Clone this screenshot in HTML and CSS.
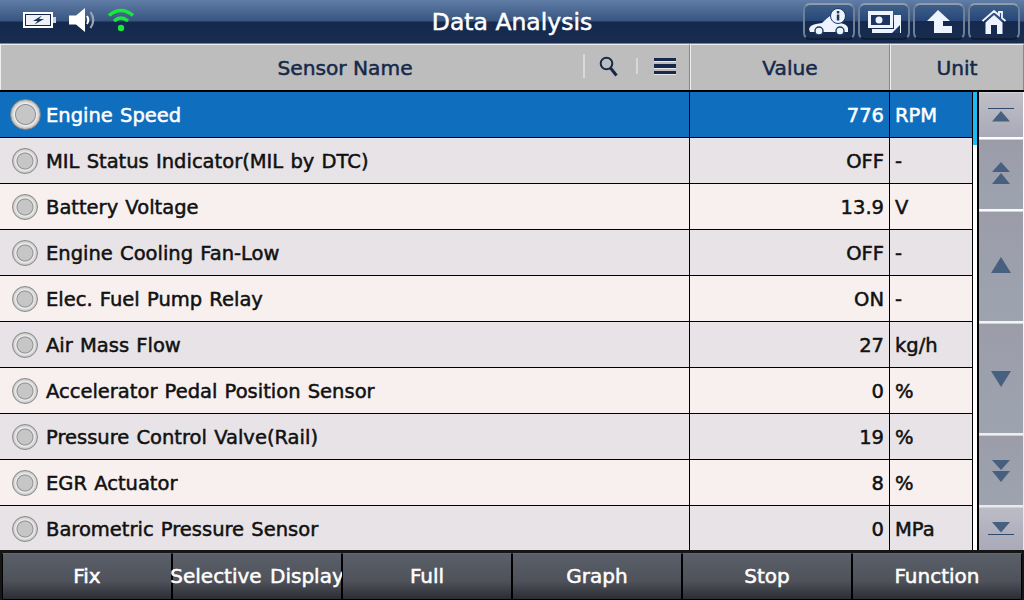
FILE: index.html
```html
<!DOCTYPE html>
<html lang="en">
  <head>
    <meta charset="UTF-8" />
    <title>Data Analysis</title>
    <link rel="stylesheet" href="styles.css">
  </head>
  <body>
    <!-- Title bar -->
    <header class="topbar">
      <div class="status-icons">
        <svg width="34" height="16" viewBox="0 0 34 16">
          <rect x="0" y="0" width="30" height="16" fill="#fff"/>
          <rect x="2" y="2" width="26" height="12" fill="#16294a"/>
          <rect x="3" y="3" width="24" height="10" fill="#eef1f6"/>
          <path d="M19 3.500 L10 9 H14.500 L11.500 12.500 L21 7 H16 Z" fill="#1b3157"/>
          <rect x="30" y="5" width="3" height="6" fill="#cfd4dc"/>
        </svg>
        <svg width="27" height="24" viewBox="0 0 27 24">
          <path d="M0 7.500 H7 L16 0 V24 L7 16.500 H0 Z" fill="#fff"/>
          <path d="M18 8 Q20.500 12 18 16" fill="none" stroke="#fff" stroke-width="2"/>
          <path d="M21.500 4 Q27 12 21.500 20" fill="none" stroke="#9aa6b8" stroke-width="2.200"/>
        </svg>
        <svg width="26" height="24" viewBox="0 0 26 24">
          <path d="M1 7.500 Q13 -2.500 25 7.500" fill="none" stroke="#16e83c" stroke-width="3.400"/>
          <path d="M6 13 Q13 7 20 13" fill="none" stroke="#16e83c" stroke-width="3.400"/>
          <circle cx="13" cy="20" r="3.200" fill="#16e83c"/>
        </svg>
      </div>
      <h1 class="title">Data Analysis</h1>
      <nav class="top-buttons">
        <span class="top-btn">
          <svg width="40" height="28" viewBox="0 0 40 28">
            <path d="M0 21 Q1 17 7 16 L13 15 Q18 10 21 8 Q25 7 28 10 L31 15 Q38 16 39 20 L39 24 H1 Z" fill="#eef4ff"/>
            <circle cx="10" cy="23" r="4" fill="#eef4ff" stroke="#1d3660" stroke-width="1.400"/>
            <circle cx="31" cy="23" r="4" fill="#eef4ff" stroke="#1d3660" stroke-width="1.400"/>
            <circle cx="29" cy="8" r="7.500" fill="#eef4ff" stroke="#1d3660" stroke-width="1"/>
            <rect x="27.800" y="6.500" width="2.500" height="6" fill="#1d3660"/>
            <rect x="27.800" y="3" width="2.500" height="2.400" fill="#1d3660"/>
          </svg>
        </span>
        <span class="top-btn">
          <svg width="33" height="22" viewBox="0 0 33 22">
            <path d="M4 18 H26 V4 H33 V22 H4 Z" fill="#eef4ff"/>
            <rect x="0" y="0" width="25" height="17" fill="#eef4ff"/>
            <rect x="3" y="4" width="19" height="10" fill="#1d3660"/>
            <circle cx="11" cy="9" r="3.500" fill="#eef4ff"/>
            <path d="M24 22 L32 14 V22 Z" fill="#1d3660"/>
          </svg>
        </span>
        <span class="top-btn">
          <svg width="25" height="23" viewBox="0 0 25 23">
            <path d="M11 0 L23 11 H16 V16 H25 V23 H7 V11 H0 Z" fill="#eef4ff"/>
          </svg>
        </span>
        <span class="top-btn">
          <svg width="24" height="24" viewBox="0 0 24 24">
            <path d="M0.500 11 L12 1 L17 5.300 V2 H20 V8 L23.500 11" fill="none" stroke="#eef4ff" stroke-width="1.800"/>
            <path d="M3.500 12.500 L12 5 L20.500 12.500 V24 H15 V15 H9 V24 H3.500 Z" fill="#eef4ff"/>
          </svg>
        </span>
      </nav>
    </header>

    <!-- Column headings -->
    <section class="table-head">
      <div class="head-name">
        <span class="head-label">Sensor Name</span>
        <span class="head-tools">
          <svg width="19" height="21" viewBox="0 0 19 21">
            <circle cx="7.500" cy="7.500" r="5.800" fill="none" stroke="#16294a" stroke-width="2"/>
            <path d="M11.500 12 L17.500 19.500" stroke="#16294a" stroke-width="3"/>
          </svg>
          <span class="menu-icon"><i></i><i></i><i></i></span>
        </span>
      </div>
      <div class="head-value">Value</div>
      <div class="head-unit">Unit</div>
    </section>

    <!-- Data rows and paging -->
    <section class="content">
      <div class="rows">
        <div class="row active"><span class="name"><i class="dot"></i>Engine Speed</span><span class="value">776</span><span class="unit">RPM</span></div>
        <div class="row"><span class="name"><i class="dot"></i>MIL Status Indicator(MIL by DTC)</span><span class="value">OFF</span><span class="unit">-</span></div>
        <div class="row"><span class="name"><i class="dot"></i>Battery Voltage</span><span class="value">13.9</span><span class="unit">V</span></div>
        <div class="row"><span class="name"><i class="dot"></i>Engine Cooling Fan-Low</span><span class="value">OFF</span><span class="unit">-</span></div>
        <div class="row"><span class="name"><i class="dot"></i>Elec. Fuel Pump Relay</span><span class="value">ON</span><span class="unit">-</span></div>
        <div class="row"><span class="name"><i class="dot"></i>Air Mass Flow</span><span class="value">27</span><span class="unit">kg/h</span></div>
        <div class="row"><span class="name"><i class="dot"></i>Accelerator Pedal Position Sensor</span><span class="value">0</span><span class="unit">%</span></div>
        <div class="row"><span class="name"><i class="dot"></i>Pressure Control Valve(Rail)</span><span class="value">19</span><span class="unit">%</span></div>
        <div class="row"><span class="name"><i class="dot"></i>EGR Actuator</span><span class="value">8</span><span class="unit">%</span></div>
        <div class="row"><span class="name"><i class="dot"></i>Barometric Pressure Sensor</span><span class="value">0</span><span class="unit">MPa</span></div>
      </div>
      <div class="scroll-track"><div class="scroll-thumb"></div></div>
      <div class="pager">
        <span class="page-btn first">
          <svg width="26" height="14" viewBox="0 0 26 14"><path d="M0 0.500 H26" stroke="#2f4a6c"/><path d="M13 3 L22 13.500 H4 Z" fill="#47607f"/></svg>
        </span>
        <span class="page-btn dbl up">
          <svg width="20" height="22" viewBox="0 0 20 22"><path d="M10 0 L19 10 H1 Z M10 11 L19 22 H1 Z" fill="#47607f"/></svg>
        </span>
        <span class="page-btn big up">
          <svg width="20" height="16" viewBox="0 0 20 16"><path d="M10 0 L20 16 H0 Z" fill="#47607f"/></svg>
        </span>
        <span class="page-btn big">
          <svg width="20" height="16" viewBox="0 0 20 16"><path d="M0 0 H20 L10 16 Z" fill="#47607f"/></svg>
        </span>
        <span class="page-btn dbl">
          <svg width="20" height="22" viewBox="0 0 20 22"><path d="M1 0 H19 L10 10 Z M1 11 H19 L10 22 Z" fill="#47607f"/></svg>
        </span>
        <span class="page-btn last">
          <svg width="26" height="14" viewBox="0 0 26 14"><path d="M4 0 H22 L13 10.500 Z" fill="#47607f"/><path d="M0 12.500 H26" stroke="#2f4a6c"/></svg>
        </span>
      </div>
    </section>

    <!-- Bottom buttons -->
    <footer class="bottom-bar">
      <span class="bottom-btn">Fix</span>
      <span class="bottom-btn">Selective Display</span>
      <span class="bottom-btn">Full</span>
      <span class="bottom-btn">Graph</span>
      <span class="bottom-btn">Stop</span>
      <span class="bottom-btn">Function</span>
    </footer>
  </body>
</html>
```

FILE: styles.css
```css
* {
  box-sizing: border-box;
}
html,
body {
  margin: 0;
  height: 100%;
}
body {
  display: flex;
  flex-direction: column;
  width: 1024px;
  height: 600px;
  overflow: hidden;
  background: #000;
  font-family: "DejaVu Sans", sans-serif;
  font-size: 19.5px;
  word-spacing: 1px;
  -webkit-text-stroke: 0.5px currentColor;
}

/* Title bar */
.topbar {
  display: flex;
  align-items: center;
  position: relative;
  height: 44px;
  flex: none;
  border-bottom: 1px solid #7a8698;
  background: linear-gradient(#5f7da6 0, #37557f 21px, #14294d 22px, #182c50 43px);
}
.status-icons {
  display: flex;
  align-items: center;
  gap: 12px;
  padding: 0 0 4px 23px;
}
.title {
  position: absolute;
  left: 0;
  right: 0;
  margin: 0;
  text-align: center;
  font-size: 23.5px;
  font-weight: normal;
  word-spacing: 0;
  color: #fff;
}
.top-buttons {
  display: flex;
  gap: 3px;
  margin-left: auto;
  padding-right: 4px;
  z-index: 1;
}
.top-btn {
  display: flex;
  justify-content: center;
  align-items: center;
  width: 52px;
  height: 37px;
  border: 2px solid #6f7f97;
  border-top-color: #8f9cae;
  border-bottom-color: #101d36;
  border-radius: 7px;
  background: linear-gradient(#3f5f88, #27477a 47%, #14294d 50%, #182c50);
}

/* Column headings */
.table-head {
  display: grid;
  grid-template-columns: 690px 200px 1fr;
  height: 48px;
  flex: none;
  border-bottom: 2px solid #000;
  background: #bdbdbd;
  color: #16294a;
  font-size: 20.2px;
  word-spacing: 0;
}
.table-head > div {
  display: flex;
  justify-content: center;
  align-items: center;
  padding-top: 1px;
  border-top: 1px solid #eee;
  border-left: 1px solid #eee;
  border-right: 1px solid #888;
}
.head-name {
  position: relative;
}
.head-tools {
  position: absolute;
  top: 9px;
  right: 0;
  display: flex;
  align-items: center;
  gap: 18px;
  height: 24px;
  width: 106px;
  padding-left: 14px;
  border-left: 2px solid #d8d8d8;
}
.menu-icon {
  display: flex;
  flex-direction: column;
  gap: 3px;
  padding-left: 16px;
  border-left: 2px solid #d8d8d8;
}
.menu-icon i {
  display: block;
  width: 22px;
  height: 3.500px;
  background: #16294a;
  box-shadow: 0 1px 0 #e8e8e8;
}

/* Rows */
.content {
  display: flex;
  flex: 1;
  min-height: 0;
}
.rows {
  width: 972px;
  flex: none;
  overflow: hidden;
  display: flex;
  flex-direction: column;
  background: #000;
}
.row {
  display: grid;
  grid-template-columns: 690px 200px 82px;
  height: 46px;
  flex: none;
  border-bottom: 1px solid #000;
  color: #111;
  background: #f7f0ef;
}
.row:nth-child(even) {
  background: #e7e3e6;
}
.row.active {
  background: #106ebe;
  color: #fff;
}
.row > span {
  display: flex;
  align-items: center;
  padding-top: 1px;
  border-right: 1px solid #000;
}
.name {
  padding-left: 12px;
}
.value {
  justify-content: flex-end;
  padding-right: 5px;
}
.unit {
  padding-left: 5px;
  border-right: 0 !important;
}
.dot {
  width: 26px;
  height: 26px;
  margin: -1px 8px 0 0;
  flex: none;
  border-radius: 50%;
  border: 1px solid #8a8a8a;
  background: radial-gradient(circle, #c6c6c6 0 7px, #8f8f8f 8px, #efefef 9px, #b5b5b5 13px);
}
.active .dot {
  width: 31px;
  height: 31px;
  margin: -2px 5px 0 -2px;
  background: radial-gradient(circle, #c6c6c6 0 9px, #8f8f8f 10px, #efefef 11px, #b5b5b5 15px);
}

/* Scroll indicator */
.scroll-track {
  width: 4px;
  margin: 0 2px 0 1px;
  background: #fff;
  flex: none;
}
.scroll-thumb {
  width: 100%;
  height: 53px;
  background: #1bbcf5;
}

/* Paging buttons */
.pager {
  display: flex;
  flex-direction: column;
  gap: 2px;
  flex: 1;
  padding-right: 1px;
  background: linear-gradient(#fff, #e8e8e8);
}
.page-btn {
  display: flex;
  justify-content: center;
  align-items: center;
  border-top: 1px solid #d0d2d8;
  background: linear-gradient(#9c9ca9, #9ca4b0);
}
.page-btn.up {
  padding-bottom: 4px;
}
.page-btn.first {
  height: 45px;
  background: linear-gradient(#c0bfc7, #a9a9b8);
}
.page-btn.last {
  flex: 1;
  background: linear-gradient(#bcbcc6, #a9a9b8);
}
.page-btn.dbl {
  height: 70px;
}
.page-btn.big {
  height: 110px;
}

/* Bottom buttons */
.bottom-bar {
  display: grid;
  grid-template-columns: repeat(6, 170px);
  height: 50px;
  flex: none;
  padding: 3px 2px 0;
  background: #161616;
}
.bottom-btn {
  display: flex;
  justify-content: center;
  align-items: center;
  padding-bottom: 2px;
  white-space: nowrap;
  border: 1px solid #000;
  border-top-color: #62666f;
  background: linear-gradient(#5a5f69, #4f525b 60%, #2b2d33);
  color: #fff;
  font-size: 20px;
  word-spacing: 2px;
}
```
